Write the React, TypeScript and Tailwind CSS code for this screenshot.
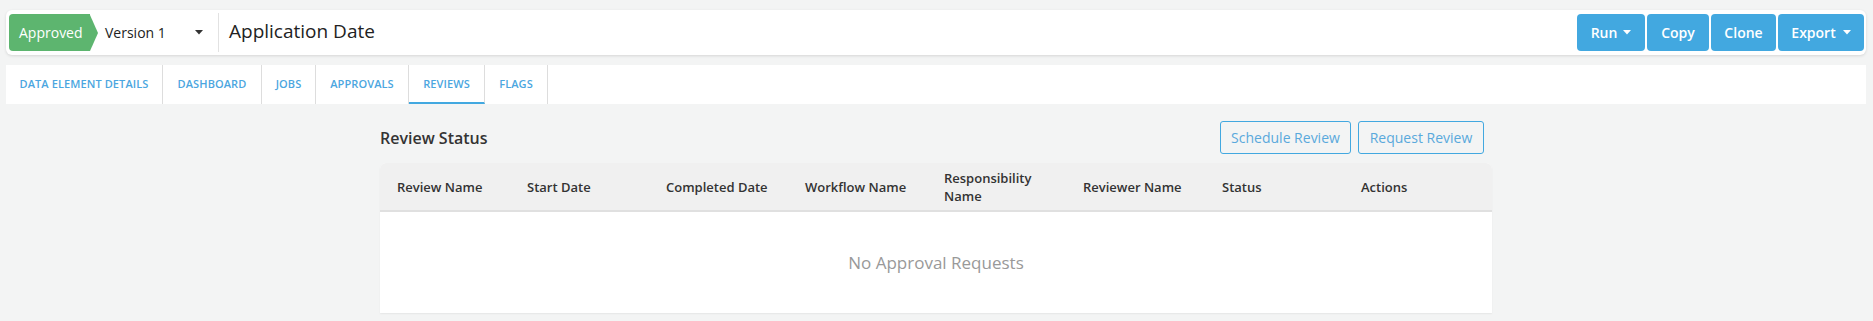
import React from "react";

const tabs: { label: string; w: string }[] = [
  { label: "DATA ELEMENT DETAILS", w: "w-[157px]" },
  { label: "DASHBOARD", w: "w-[99px]" },
  { label: "JOBS", w: "w-[54px]" },
  { label: "APPROVALS", w: "w-[93px]" },
  { label: "REVIEWS", w: "w-[76px]" },
  { label: "FLAGS", w: "w-[63px]" },
];
const cols = ["Review Name", "Start Date", "Completed Date", "Workflow Name", "Responsibility Name", "Reviewer Name", "Status", "Actions"];

function Caret({ className = "" }: { className?: string }) {
  return (
    <svg width="8" height="5" viewBox="0 0 8 5" className={className}>
      <path d="M0 0 L8 0 L4 4.5 Z" fill="currentColor" />
    </svg>
  );
}

export default function App() {
  return (
    <div
      className="w-full h-[321px] bg-[#f3f4f4] pt-[10px] pl-[6px] pr-[7px] overflow-hidden"
      style={{ fontFamily: '"Open Sans", "Noto Sans", sans-serif' }}
    >
      {/* Header card */}
      <div className="h-[45px] bg-white rounded-[6px] shadow-[0_1px_3px_rgba(0,0,0,0.12)] flex items-center pl-[3px] pr-[2px]">
        <div className="flex items-center h-[37px]">
          <div className="h-full bg-[#5db56f] rounded-l-[4px] pl-[10px] pr-[8px] flex items-center text-white text-[14px] w-[81px]">
            Approved
          </div>
          <div className="w-0 h-0 border-y-[18.5px] border-y-transparent border-l-[8px] border-l-[#5db56f]" />
        </div>
        <div className="flex items-center w-[120px] pl-[7px] pr-[15px] justify-between text-[14px] text-[#222]">
          <span>Version 1</span>
          <Caret className="text-[#333]" />
        </div>
        <div className="w-px h-[39px] bg-[#e2e2e2]" />
        <div className="pl-[10px] text-[19px] text-[#222] leading-none -mt-[2px]">Application Date</div>
        <div className="ml-auto flex items-center gap-[2px]">
          <button className="h-[37px] w-[68px] bg-[#42a8e0] rounded-[4px] text-white text-[14px] font-semibold flex items-center justify-center gap-[6px]">
            Run <Caret />
          </button>
          <button className="h-[37px] w-[62px] bg-[#42a8e0] rounded-[4px] text-white text-[14px] font-semibold flex items-center justify-center">
            Copy
          </button>
          <button className="h-[37px] w-[65px] bg-[#42a8e0] rounded-[4px] text-white text-[14px] font-semibold flex items-center justify-center">
            Clone
          </button>
          <button className="h-[37px] w-[86px] bg-[#42a8e0] rounded-[4px] text-white text-[14px] font-semibold flex items-center justify-center gap-[7px]">
            Export <Caret />
          </button>
        </div>
      </div>

      {/* Tabs */}
      <div className="mt-[10px] h-[39px] bg-white flex">
        {tabs.map((t) => {
          const active = t.label === "REVIEWS";
          return (
            <div
              key={t.label}
              className={`${t.w} h-full flex items-center justify-center border-r border-[#dddddd] text-[11px] font-semibold text-[#4ba6e0] tracking-[0.1px] ${
                active ? "border-b-2 border-b-[#42a8e0] pt-[2px]" : ""
              }`}
            >
              {t.label}
            </div>
          );
        })}
      </div>

      {/* Content */}
      <div className="w-[1112px] mx-auto mt-[17px]">
        <div className="flex items-center h-[33px]">
          <div className="text-[16px] font-semibold text-[#333] pt-[1px]">Review Status</div>
          <div className="ml-auto flex gap-[7px] pr-[8px]">
            <button className="h-[33px] w-[131px] border border-[#42a8e0] rounded-[3px] text-[#5aa9dc] text-[14px] flex items-center justify-center">
              Schedule Review
            </button>
            <button className="h-[33px] w-[126px] border border-[#42a8e0] rounded-[3px] text-[#5aa9dc] text-[14px] flex items-center justify-center">
              Request Review
            </button>
          </div>
        </div>

        <div className="mt-[9px] rounded-t-[6px] bg-white shadow-[0_1px_2px_rgba(0,0,0,0.06)]">
          <div className="h-[49px] bg-[#f0f0f0] rounded-t-[6px] border-b-2 border-[#e0e0e0] grid grid-cols-[140px_139px_139px_139px_139px_139px_139px_1fr] items-center text-[13px] font-semibold text-[#333]">
            {cols.map((c, i) => (
              <div key={c} className={`${i === 0 ? "pl-[17px]" : "pl-[7px]"} leading-[18px] ${c === "Responsibility Name" ? "w-[110px]" : ""}`}>
                {c}
              </div>
            ))}
          </div>
          <div className="h-[101px] flex items-center justify-center text-[17px] text-[#999]">
            No Approval Requests
          </div>
        </div>
      </div>
    </div>
  );
}
